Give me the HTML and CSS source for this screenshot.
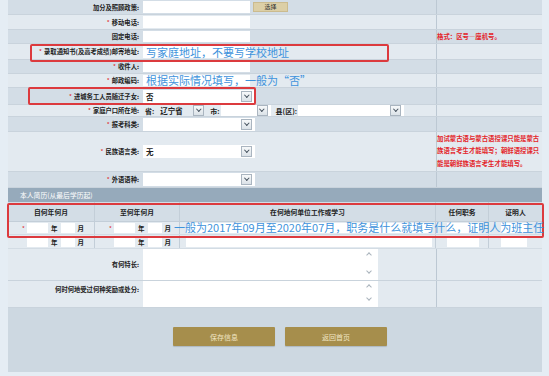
FILE: index.html
```html
<!DOCTYPE html>
<html lang="zh-CN">
<head>
    <meta charset="UTF-8">
    <meta name="viewport" content="width=device-width, initial-scale=1.0">
    <title>考生信息填写</title>
    <link rel="stylesheet" href="styles.css">
</head>
<body>
    <div class="panel">
        <div class="row mid h15">
            <div class="label">加分及照顾政策:</div>
            <div class="value"><span class="field w107"></span><button class="pick">选择</button></div>
            <div class="note"></div>
        </div>
        <div class="row lite h15">
            <div class="label"><span class="req">*</span>移动电话:</div>
            <div class="value"><span class="field w107"></span></div>
            <div class="note"></div>
        </div>
        <div class="row mid h14">
            <div class="label">固定电话:</div>
            <div class="value"><span class="field w107"></span></div>
            <div class="note">格式：区号—座机号。</div>
        </div>
        <div class="row lite h16">
            <div class="label"><span class="req">*</span>录取通知书(及高考成绩)邮寄地址:</div>
            <div class="value"><span class="field w107"></span></div>
            <div class="note"></div>
        </div>
        <div class="row mid h14">
            <div class="label"><span class="req">*</span>收件人:</div>
            <div class="value"><span class="field w107"></span></div>
            <div class="note"></div>
        </div>
        <div class="row lite h14">
            <div class="label"><span class="req">*</span>邮政编码:</div>
            <div class="value"><span class="field w107"></span></div>
            <div class="note"></div>
        </div>
        <div class="row mid h17">
            <div class="label"><span class="req">*</span>进城务工人员随迁子女:</div>
            <div class="value"><span class="select w112"><span class="txt">否</span><span class="arrow"></span></span></div>
            <div class="note"></div>
        </div>
        <div class="row lite h12">
            <div class="label"><span class="req">*</span>家庭户口所在地:</div>
            <div class="value place">
                <span class="cap">省:</span>
                <span class="select prov"><span class="txt">辽宁省</span><span class="arrow"></span></span>
                <span class="cap city-cap">市:</span>
                <span class="select city"><span class="txt"></span><span class="arrow"></span></span>
                <span class="cap county-cap">县(区):</span>
                <span class="select county"><span class="txt"></span><span class="arrow"></span></span>
            </div>
            <div class="note"></div>
        </div>
        <div class="row mid h15">
            <div class="label"><span class="req">*</span>报考科类:</div>
            <div class="value"><span class="select w112"><span class="txt"></span><span class="arrow"></span></span></div>
            <div class="note"></div>
        </div>
        <div class="row lite h40">
            <div class="label"><span class="req">*</span>民族语言类:</div>
            <div class="value"><span class="select w112"><span class="txt">无</span><span class="arrow"></span></span></div>
            <div class="note multi">加试蒙古语与蒙古语授课只能是蒙古族语言考生才能填写；朝鲜语授课只能是朝鲜族语言考生才能填写。</div>
        </div>
        <div class="row mid h16">
            <div class="label"><span class="req">*</span>外语语种:</div>
            <div class="value"><span class="select w112"><span class="txt"></span><span class="arrow"></span></span></div>
            <div class="note"></div>
        </div>

        <div class="section">本人简历(从最后学历起)</div>

        <div class="resume thead">
            <div>自何年何月</div>
            <div>至何年何月</div>
            <div>在何地何单位工作或学习</div>
            <div>任何职务</div>
            <div>证明人</div>
        </div>
        <div class="resume rrow h13">
            <div class="ym"><span class="req star">*</span><span class="field yr"></span><span class="unit">年</span><span class="field mo"></span><span class="unit">月</span></div>
            <div class="ym"><span class="req star">*</span><span class="field yr"></span><span class="unit">年</span><span class="field mo"></span><span class="unit">月</span></div>
            <div><span class="field place-in"></span></div>
            <div><span class="field duty"></span></div>
            <div><span class="field witness"></span></div>
        </div>
        <div class="resume rrow h14">
            <div class="ym"><span class="star"></span><span class="field yr"></span><span class="unit">年</span><span class="field mo"></span><span class="unit">月</span></div>
            <div class="ym"><span class="star"></span><span class="field yr"></span><span class="unit">年</span><span class="field mo"></span><span class="unit">月</span></div>
            <div><span class="field place-in"></span></div>
            <div><span class="field duty"></span></div>
            <div><span class="field witness"></span></div>
        </div>

        <div class="row lite h32">
            <div class="label">有何特长:</div>
            <div class="value"><span class="textarea"></span></div>
            <div class="note"></div>
        </div>
        <div class="row lite h27">
            <div class="label top">何时何地受过何种奖励或处分:</div>
            <div class="value"><span class="textarea"></span></div>
            <div class="note"></div>
        </div>

        <div class="actions">
            <button class="btn">保存信息</button>
            <button class="btn">返回首页</button>
        </div>

        <!-- 标注 -->
        <div class="mark m-addr"></div>
        <div class="mark m-migrant"></div>
        <div class="mark m-resume"></div>
        <div class="hint h-addr">写家庭地址，不要写学校地址</div>
        <div class="hint h-zip">根据实际情况填写，一般为“否”</div>
        <div class="hint h-resume">一般为2017年09月至2020年07月，职务是什么就填写什么，证明人为班主任</div>
    </div>
</body>
</html>
```

FILE: styles.css
```css
body {
    margin: 0;
    background: #e5edf4;
    font-family: "Noto Sans CJK SC", "DejaVu Sans", sans-serif;
    overflow: hidden;
}
.panel {
    position: relative;
    width: 534px;
    margin-left: 8px;
    background: #e2e9ef;
}

/* form rows */
.row {
    display: grid;
    grid-template-columns: 135px 293px 106px;
    box-sizing: border-box;
    border-bottom: 1px solid #c9d3dc;
}
.row.mid { background: #d3dde6; }
.row.lite { background: #e3eaf0; }
.h12 { height: 12px; }
.h13 { height: 13px; }
.h14 { height: 14px; }
.h15 { height: 15px; }
.h16 { height: 16px; }
.h17 { height: 17px; }
.h27 { height: 27px; }
.h32 { height: 32px; }
.h40 { height: 40px; }

.label {
    display: flex;
    align-items: center;
    justify-content: flex-end;
    padding-right: 4px;
    font-size: 6.3px;
    font-weight: 700;
    color: #222;
    white-space: nowrap;
}
.label.top { align-items: flex-start; padding-top: 4px; }
.req { color: #e02424; font-weight: 400; margin-right: 2px; }
.value {
    display: flex;
    align-items: center;
}
.note {
    border-left: 1px solid #bcc8d3;
    display: flex;
    align-items: center;
    font-size: 6.4px;
    font-weight: 700;
    color: #e3262b;
    white-space: nowrap;
}
.note.multi {
    white-space: normal;
    line-height: 12.6px;
    word-break: break-all;
}

.field {
    display: block;
    background: #fff;
    align-self: stretch;
    margin: 1px 0;
}
.w107 { width: 107px; }

.pick {
    margin-left: 3px;
    width: 35px;
    height: 10px;
    padding: 0;
    border: 1px solid #cbbb8e;
    background: #dccfa6;
    color: #333;
    font-family: inherit;
    font-size: 6px;
    line-height: 8px;
}

/* selects */
.select {
    display: flex;
    align-items: center;
    justify-content: space-between;
    height: 13px;
    background: #fff;
    box-sizing: border-box;
}
.w112 { width: 112px; }
.select .txt {
    padding-left: 3px;
    font-size: 7.5px;
    font-weight: 700;
    color: #222;
}
.arrow {
    position: relative;
    width: 9px;
    height: 9px;
    margin-right: 3px;
    border: 1px solid #aab5c0;
    background: linear-gradient(#f7f9fa, #dbe2e8);
}
.arrow::after {
    content: '';
    position: absolute;
    left: 2.6px;
    top: 1.4px;
    width: 2.6px;
    height: 2.6px;
    border-right: 1.3px solid #46525e;
    border-bottom: 1.3px solid #46525e;
    transform: rotate(45deg);
}
.place { padding-left: 2px; }
.cap {
    font-size: 7px;
    font-weight: 700;
    color: #222;
    white-space: nowrap;
}
.place .select { height: 11px; }
.prov { width: 50px; margin-left: 3px; background: transparent; }
.city-cap { margin-left: 3px; }
.city { width: 50px; margin-left: 1px; }
.county-cap { margin-left: 5px; }
.county { width: 106px; margin-left: 1px; }

/* resume */
.section {
    height: 14px;
    display: flex;
    align-items: center;
    padding-left: 12px;
    background: #96aabb;
    color: #fff;
    font-size: 6.8px;
}
.resume {
    display: grid;
    grid-template-columns: 87px 85px 256px 53px 53px;
    box-sizing: border-box;
}
.resume > div {
    display: flex;
    align-items: center;
    border-right: 1px solid #c3ced8;
}
.resume > div:last-child { border-right: none; }
.thead {
    height: 20px;
    background: #d3dde6;
    border-bottom: 1px solid #c3ced8;
}
.thead > div {
    justify-content: center;
    font-size: 6.8px;
    font-weight: 700;
    color: #222;
}
.rrow {
    background: #e3eaf0;
    border-bottom: 1px solid #d3dce4;
}
.rrow .field { margin: 1px 0; }
.ym { padding-left: 14px; }
.star { width: 5px; margin: 0; font-size: 6px; }
.yr { width: 21px; }
.mo { width: 14px; }
.unit {
    margin: 0 3px;
    font-size: 6.5px;
    font-weight: 700;
    color: #222;
}
.place-in { width: 246px; margin-left: 6px !important; }
.duty { width: 32px; margin-left: 11px !important; }
.witness { width: 26px; margin-left: 12px !important; }

/* text areas */
.textarea {
    position: relative;
    display: block;
    align-self: stretch;
    width: 235px;
    background: #fff;
}
.textarea::before,
.textarea::after {
    content: '';
    position: absolute;
    right: 7px;
    width: 3px;
    height: 3px;
    border-right: 1px solid #a9b3bc;
    border-bottom: 1px solid #a9b3bc;
}
.textarea::before { top: 4px; transform: rotate(-135deg); }
.textarea::after { bottom: 7px; transform: rotate(45deg); }

/* buttons */
.actions {
    height: 64px;
    box-sizing: border-box;
    display: flex;
    align-items: flex-start;
    gap: 10px;
    padding: 19px 0 0 165px;
    background: #cdd8e1;
}
.btn {
    width: 102px;
    height: 19px;
    padding: 0;
    border: none;
    border-radius: 1px;
    background: #a68e4c;
    color: #f1e5c3;
    font-family: inherit;
    font-size: 7px;
    box-shadow: 0 1px 1px rgba(0, 0, 0, .15);
}

/* annotations over the form */
.mark {
    position: absolute;
    box-sizing: border-box;
    border: 2px solid #dc3a3e;
    border-radius: 2px;
}
.m-addr { left: 22px; top: 44px; width: 359px; height: 18px; }
.m-migrant { left: 20px; top: 87px; width: 228px; height: 18px; }
.m-resume { left: -1px; top: 203px; width: 537px; height: 35px; }
.hint {
    position: absolute;
    color: #3e93dc;
    font-size: 11px;
    line-height: 11px;
    white-space: nowrap;
}
.h-addr { left: 138px; top: 47px; }
.h-zip { left: 138px; top: 75px; }
.h-resume { left: 166px; top: 222px; }
```
